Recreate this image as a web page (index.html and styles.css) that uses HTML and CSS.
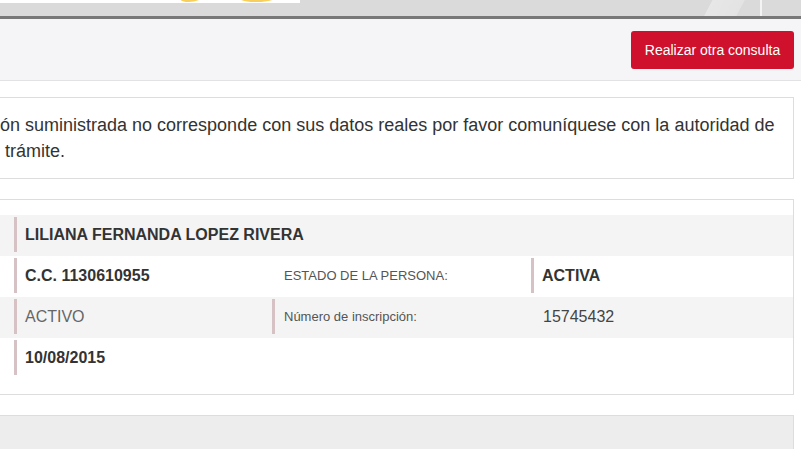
FILE: index.html
```html
<!DOCTYPE html>
<html lang="es">
<head>
<meta charset="utf-8">
<title>Consulta</title>
<link rel="stylesheet" href="styles.css">
</head>
<body>
<div class="top-band">
  <div class="banner">
    <span class="swoosh swoosh-a"></span>
    <span class="swoosh swoosh-b"></span>
  </div>
  <div class="band-deco"></div>
</div>
<div class="toolbar">
  <button class="btn-primary" type="button">Realizar otra consulta</button>
</div>
<main class="content">
  <div class="notice">
    <p class="notice-line">ón suministrada no corresponde con sus datos reales por favor comuníquese con la autoridad de</p>
    <p class="notice-line notice-indent">trámite.</p>
  </div>
  <section class="card">
    <div class="row row-alt">
      <div class="cell cell-bar cell-full strong">LILIANA FERNANDA LOPEZ RIVERA</div>
    </div>
    <div class="row">
      <div class="cell cell-bar strong">C.C. 1130610955</div>
      <div class="cell label">ESTADO DE LA PERSONA:</div>
      <div class="cell cell-bar strong">ACTIVA</div>
    </div>
    <div class="row row-alt">
      <div class="cell cell-bar muted">ACTIVO</div>
      <div class="cell cell-bar label">Número de inscripción:</div>
      <div class="cell value">15745432</div>
    </div>
    <div class="row">
      <div class="cell cell-bar strong">10/08/2015</div>
    </div>
  </section>
  <div class="footer-box"></div>
</main>
</body>
</html>
```
FILE: styles.css
```css
html, body {
  margin: 0;
  padding: 0;
  background: #ffffff;
  overflow: hidden;
  height: 100%;
}
body {
  font-family: "Liberation Sans", Arial, sans-serif;
  color: #333333;
}

.top-band {
  position: relative;
  height: 16px;
  background: #dadada;
  border-bottom: 3px solid #787878;
}
.banner {
  position: relative;
  width: 300px;
  height: 3px;
  background: #ffffff;
  overflow: hidden;
}
.swoosh {
  position: absolute;
  background: #f7cf5a;
  border-radius: 50%;
}
.swoosh-a {
  left: 179px;
  top: -20px;
  width: 32px;
  height: 22px;
  transform: skewX(-30deg);
}
.swoosh-b {
  left: 235px;
  top: -20px;
  width: 54px;
  height: 22px;
  transform: skewX(-30deg);
}
.band-deco {
  position: absolute;
  right: 39px;
  top: 0;
  width: 72px;
  height: 16px;
  border-right: 2px solid #f4f4f4;
  background: linear-gradient(118deg, rgba(255,255,255,0) 30%, rgba(255,255,255,0.35) 31%, rgba(255,255,255,0.25) 70%, rgba(255,255,255,0) 71%);
}

.toolbar {
  display: flex;
  justify-content: flex-end;
  align-items: center;
  height: 61px;
  padding-right: 7px;
  background: #f5f5f7;
  border-bottom: 1px solid #e2e2e4;
}
.btn-primary {
  height: 38px;
  width: 163px;
  padding: 0;
  border: none;
  border-radius: 3px;
  background: #d0112d;
  color: #ffffff;
  font-family: "Liberation Sans", Arial, sans-serif;
  font-size: 14px;
}

.content {
  padding-top: 16px;
}
.notice {
  margin: 0 7px 0 -1px;
  border: 1px solid #dddddd;
  padding: 14px 0 14px 0;
  font-size: 18px;
  line-height: 26px;
  color: #333333;
}
.notice-line {
  margin: 0;
}
.notice-indent {
  padding-left: 5px;
}

.card {
  margin: 20px 7px 0 -1px;
  border: 1px solid #dddddd;
  padding: 15px 0;
}
.row {
  display: grid;
  grid-template-columns: 258px 259px 1fr;
  height: 41px;
  padding-left: 14px;
}
.row-alt {
  background: #f4f4f4;
}
.cell {
  margin-top: 2px;
  height: 35px;
  display: flex;
  align-items: center;
  padding-left: 8px;
  border-left: 3px solid transparent;
  font-size: 16px;
  white-space: nowrap;
}
.cell-bar {
  border-left-color: #d6c1c4;
}
.cell-full {
  grid-column: 1 / -1;
}
.strong {
  font-weight: bold;
  color: #333333;
}
.muted {
  color: #666666;
}
.label {
  font-size: 13px;
  color: #555555;
  padding-left: 9px;
}
.value {
  color: #444444;
  padding-left: 9px;
}

.footer-box {
  margin: 20px 7px 0 -1px;
  height: 80px;
  background: #ededed;
  border: 1px solid #dddddd;
}
```
